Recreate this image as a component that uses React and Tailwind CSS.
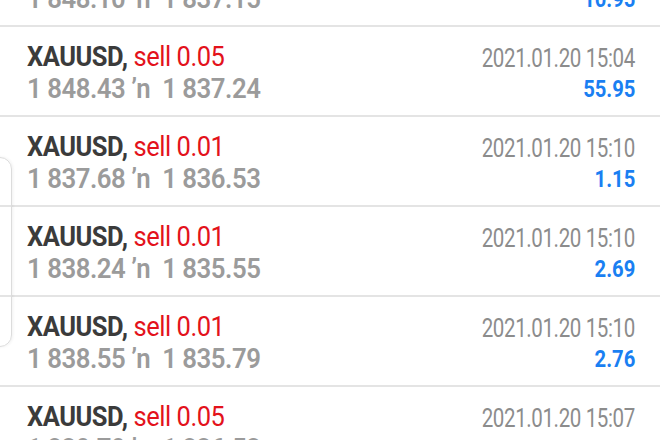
import React from "react";

const trades = [
  { open: "1 848.10", close: "1 837.15", lots: "0.05", time: "2021.01.20 15:04", profit: "10.95" },
  { open: "1 848.43", close: "1 837.24", lots: "0.05", time: "2021.01.20 15:04", profit: "55.95" },
  { open: "1 837.68", close: "1 836.53", lots: "0.01", time: "2021.01.20 15:10", profit: "1.15" },
  { open: "1 838.24", close: "1 835.55", lots: "0.01", time: "2021.01.20 15:10", profit: "2.69" },
  { open: "1 838.55", close: "1 835.79", lots: "0.01", time: "2021.01.20 15:10", profit: "2.76" },
  { open: "1 839.79", close: "1 836.53", lots: "0.05", time: "2021.01.20 15:07", profit: "16.30" },
];

const TradeRow = ({ trade }) => (
  <div className="h-[90px] border-b-2 border-[#e4e4e4] flex justify-between pl-[27px] pr-[25px]">
    <div className="flex flex-col pt-[14px]">
      <p className="text-[28px] leading-[32px] tracking-[-0.5px] whitespace-nowrap scale-x-[0.91] origin-left">
        <span className="font-bold text-[#3b3b3b]">XAUUSD,</span>{" "}
        <span className="text-[#e3121b]">sell {trade.lots}</span>
      </p>
      <p className="text-[28px] leading-[32px] font-semibold text-[#9b9b9b] tracking-[-0.5px] whitespace-nowrap scale-x-[0.92] origin-left">
        {trade.open} ʼn&nbsp; {trade.close}
      </p>
    </div>
    <div className="flex flex-col items-end pt-[15px]">
      <p className="text-[26px] leading-[32px] text-[#8c8c8c] tracking-[-0.5px] whitespace-nowrap scale-x-[0.79] origin-right">
        {trade.time}
      </p>
      <p className="text-[23px] leading-[32px] font-bold text-[#1a7ff2] scale-x-[0.88] origin-right">
        {trade.profit}
      </p>
    </div>
  </div>
);

const App = () => {
  return (
    <div
      className="relative w-[660px] h-[440px] overflow-hidden bg-white"
      style={{ fontFamily: "Roboto, 'Liberation Sans', sans-serif" }}
    >
      <div className="-mt-[63px]">
        {trades.map((trade, i) => (
          <TradeRow key={i} trade={trade} />
        ))}
      </div>
      <div className="absolute left-[-20px] top-[157px] w-[32px] h-[190px] rounded-[12px] border border-[#dcdcdc] shadow-[1px_0_3px_rgba(0,0,0,0.06)]" />
    </div>
  );
};

export default App;
